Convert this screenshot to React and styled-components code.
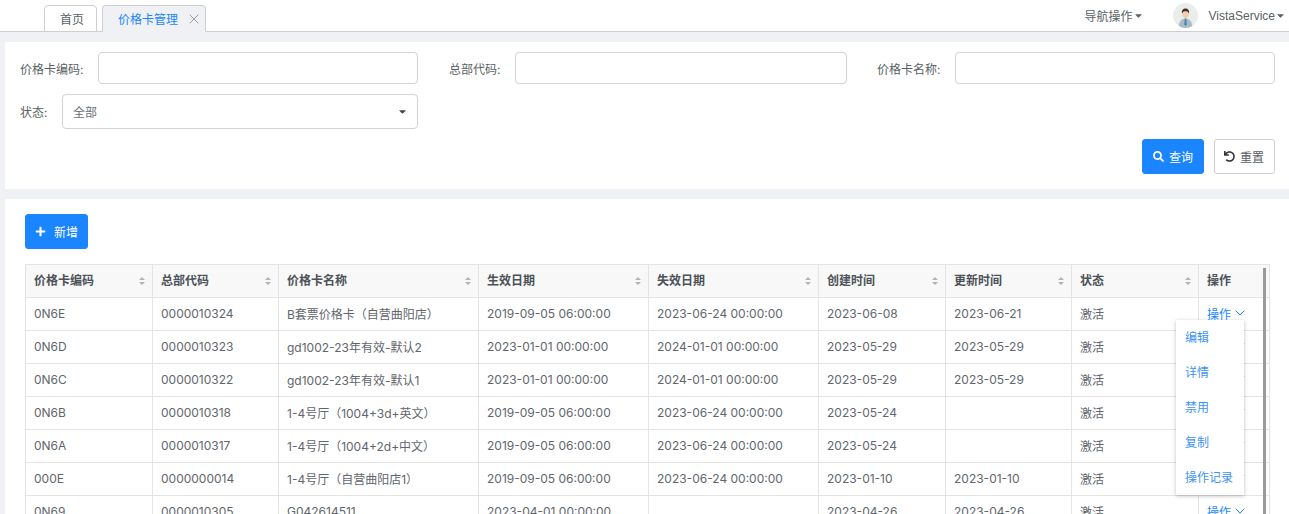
import styled, { createGlobalStyle } from "styled-components";
import { FaSearch, FaPlus, FaUndo, FaCaretDown } from "react-icons/fa";
import { LuChevronDown, LuX } from "react-icons/lu";

const columns = [
  { title: "价格卡编码", width: 127, sort: true },
  { title: "总部代码", width: 126, sort: true },
  { title: "价格卡名称", width: 200, sort: true },
  { title: "生效日期", width: 170, sort: true },
  { title: "失效日期", width: 170, sort: true },
  { title: "创建时间", width: 127, sort: true },
  { title: "更新时间", width: 126, sort: true },
  { title: "状态", width: 127, sort: true },
  { title: "操作", width: 71, sort: false },
];

const rows = [
  ["0N6E", "0000010324", "B套票价格卡（自营曲阳店）", "2019-09-05 06:00:00", "2023-06-24 00:00:00", "2023-06-08", "2023-06-21"],
  ["0N6D", "0000010323", "gd1002-23年有效-默认2", "2023-01-01 00:00:00", "2024-01-01 00:00:00", "2023-05-29", "2023-05-29"],
  ["0N6C", "0000010322", "gd1002-23年有效-默认1", "2023-01-01 00:00:00", "2024-01-01 00:00:00", "2023-05-29", "2023-05-29"],
  ["0N6B", "0000010318", "1-4号厅（1004+3d+英文）", "2019-09-05 06:00:00", "2023-06-24 00:00:00", "2023-05-24", ""],
  ["0N6A", "0000010317", "1-4号厅（1004+2d+中文）", "2019-09-05 06:00:00", "2023-06-24 00:00:00", "2023-05-24", ""],
  ["000E", "0000000014", "1-4号厅（自营曲阳店1）", "2019-09-05 06:00:00", "2023-06-24 00:00:00", "2023-01-10", "2023-01-10"],
  ["0N69", "0000010305", "G042614511", "2023-04-01 00:00:00", "", "2023-04-26", "2023-04-26"],
];

const menuItems = ["编辑", "详情", "禁用", "复制", "操作记录"];

const GlobalStyle = createGlobalStyle`
  html, body {
    margin: 0;
    height: 514px;
    overflow: hidden;
    background: #eff1f4;
  }
  body, input, button {
    font-family: Inter, "Noto Sans CJK SC", sans-serif;
    font-size: 12px;
    color: #595f66;
  }
`;

const Page = styled.div`
  height: 514px;
  overflow: hidden;
  display: flex;
  flex-direction: column;
`;

const TopBar = styled.header`
  height: 31px;
  flex: none;
  display: flex;
  align-items: flex-end;
  padding-left: 44px;
  gap: 5px;
  background: #fff;
  border-bottom: 1px solid #cfcfcf;
`;

const Tab = styled.div`
  height: 25px;
  margin-bottom: -1px;
  padding: ${(p) => (p.$active ? "0 3px 0 15px" : "0 12px 0 15px")};
  display: flex;
  align-items: center;
  gap: 8px;
  border: 1px solid #cfcfcf;
  border-bottom: 1px solid ${(p) => (p.$active ? "#eff1f4" : "#cfcfcf")};
  border-radius: 4px 4px 0 0;
  background: ${(p) => (p.$active ? "#eff1f4" : "#fff")};
  color: ${(p) => (p.$active ? "#1a85ff" : "#595f66")};
  svg {
    color: #9a9da1;
  }
`;

const TopRight = styled.div`
  margin-left: auto;
  height: 31px;
  display: flex;
  align-items: center;
  padding-right: 3px;
`;

const NavMenu = styled.span`
  display: flex;
  align-items: center;
  margin-right: 29px;
`;

const UserName = styled(NavMenu)`
  margin-right: 0;
  font-family: "Liberation Sans", sans-serif;
`;

const Avatar = styled.svg`
  width: 25px;
  height: 25px;
  margin-right: 11px;
  border-radius: 50%;
`;

const Panel = styled.section`
  margin: 10px 0 0 5px;
  background: #fff;
  flex: none;
`;

const FilterPanel = styled(Panel)`
  height: 147px;
  box-sizing: border-box;
  padding: 10px 14px 0 15px;
`;

const FieldRow = styled.div`
  display: flex;
  align-items: center;
  height: ${(p) => p.$height || 32}px;
  margin-bottom: 10px;
`;

const FieldLabel = styled.label`
  width: ${(p) => p.$width}px;
  flex: none;
  color: #595f66;
`;

const TextBox = styled.div`
  width: ${(p) => p.$width}px;
  height: 32px;
  box-sizing: border-box;
  flex: none;
  margin-right: ${(p) => p.$gap || 0}px;
  border: 1px solid #d4d4d4;
  border-radius: 4px;
  background: #fff;
`;

const SelectBox = styled(TextBox)`
  height: 35px;
  display: flex;
  align-items: center;
  justify-content: space-between;
  padding: 0 9px 0 10px;
  color: #6a7077;
`;

const ButtonRow = styled.div`
  display: flex;
  justify-content: flex-end;
  gap: 10px;
`;

const Button = styled.button`
  height: 35px;
  padding: ${(p) => (p.$primary ? "0 10px" : "0 10px 0 9px")};
  display: inline-flex;
  align-items: center;
  gap: 5px;
  border-radius: 3px;
  border: 1px solid ${(p) => (p.$primary ? "#1a85ff" : "#cfcfcf")};
  background: ${(p) => (p.$primary ? "#1a85ff" : "#fff")};
  color: ${(p) => (p.$primary ? "#fff" : "#595f66")};
  svg {
    font-size: 11px;
    color: ${(p) => (p.$primary ? "#fff" : "#333")};
  }
`;

const ListPanel = styled(Panel)`
  flex: 1;
  padding: 15px 19px 0 20px;
`;

const AddButton = styled(Button)`
  display: flex;
  padding: 0 9px;
  gap: 8px;
`;

const TableWrap = styled.div`
  position: relative;
  width: 1245px;
  margin-top: 15px;
`;

const Table = styled.table`
  border-collapse: collapse;
  table-layout: fixed;
  width: 1244px;
`;

const Th = styled.th`
  box-sizing: border-box;
  height: 33px;
  padding: 0 7px 3px 8px;
  text-align: left;
  font-weight: 600;
  color: #4c5258;
  background: #f8f8f8;
  border: 1px solid #e4e4e4;
`;

const HeadCell = styled.div`
  display: flex;
  align-items: center;
  justify-content: space-between;
`;

const Td = styled.td`
  box-sizing: border-box;
  height: 33px;
  padding: 0 8px 2px;
  white-space: nowrap;
  border: 1px solid #e4e4e4;
  color: #61666c;
`;

const SortIcon = styled.svg`
  width: 6px;
  height: 8px;
  margin-top: 3px;
  fill: #b0b4b9;
`;

const ActionLink = styled.span`
  display: inline-flex;
  align-items: center;
  gap: 1px;
  color: #1a85ff;
`;

const ScrollThumb = styled.div`
  position: absolute;
  top: 4px;
  right: 4px;
  bottom: 0;
  width: 3px;
  background: #9a9a9a;
`;

const Menu = styled.ul`
  position: absolute;
  top: 56px;
  left: 1151px;
  width: 68px;
  margin: 0;
  padding: 0 0 0 9px;
  box-sizing: border-box;
  list-style: none;
  background: #fff;
  box-shadow: 0 1px 4px rgba(0, 0, 0, 0.25);
  color: #3d93f5;
`;

const MenuItem = styled.li`
  height: 35px;
  box-sizing: border-box;
  padding-bottom: 2px;
  display: flex;
  align-items: center;
`;

function Sort() {
  return (
    <SortIcon viewBox="0 0 6 8">
      <path d="M3 0 6 3H0zM0 5h6L3 8z" />
    </SortIcon>
  );
}

function UserAvatar() {
  return (
    <Avatar viewBox="0 0 25 25">
      <rect width="25" height="25" fill="#e9eeec" />
      <path d="M5.500 25c.3-6 2.500-9.500 7-9.500s6.700 3.500 7 9.500z" fill="#a9bdc9" />
      <path d="M11.800 15.500h1.400l.5 6-1.200 1.500-1.200-1.500z" fill="#4d7ea8" />
      <ellipse cx="12.500" cy="10.500" rx="3.400" ry="4.400" fill="#f3cdaf" />
      <path d="M9 10.500c-.6-3.300 1.200-5 3.500-5s4.100 1.700 3.500 5c-.6-1.700-1.800-2.300-3.500-2.300s-2.900.6-3.500 2.300z" fill="#4a2f20" />
    </Avatar>
  );
}

export default function App() {
  return (
    <Page>
      <GlobalStyle />
      <TopBar>
        <Tab>首页</Tab>
        <Tab $active>
          价格卡管理
          <LuX size={16} strokeWidth={1.5} />
        </Tab>
        <TopRight>
          <NavMenu>
            导航操作
            <FaCaretDown size={11} />
          </NavMenu>
          <UserAvatar />
          <UserName>
            VistaService
            <FaCaretDown size={11} />
          </UserName>
        </TopRight>
      </TopBar>

      <FilterPanel>
        <FieldRow>
          <FieldLabel $width={78}>价格卡编码:</FieldLabel>
          <TextBox $width={320} $gap={31} />
          <FieldLabel $width={66}>总部代码:</FieldLabel>
          <TextBox $width={332} $gap={30} />
          <FieldLabel $width={78}>价格卡名称:</FieldLabel>
          <TextBox $width={320} />
        </FieldRow>
        <FieldRow $height={35}>
          <FieldLabel $width={42}>状态:</FieldLabel>
          <SelectBox $width={356}>
            全部
            <FaCaretDown size={11} color="#444" />
          </SelectBox>
        </FieldRow>
        <ButtonRow>
          <Button $primary>
            <FaSearch />
            查询
          </Button>
          <Button>
            <FaUndo />
            重置
          </Button>
        </ButtonRow>
      </FilterPanel>

      <ListPanel>
        <AddButton $primary>
          <FaPlus />
          新增
        </AddButton>
        <TableWrap>
          <Table>
            <colgroup>
              {columns.map((c) => (
                <col key={c.title} width={c.width} />
              ))}
            </colgroup>
            <thead>
              <tr>
                {columns.map((c) => (
                  <Th key={c.title}>
                    <HeadCell>
                      {c.title}
                      {c.sort && <Sort />}
                    </HeadCell>
                  </Th>
                ))}
              </tr>
            </thead>
            <tbody>
              {rows.map((r) => (
                <tr key={r[0]}>
                  {r.map((v, i) => (
                    <Td key={i}>{v}</Td>
                  ))}
                  <Td>激活</Td>
                  <Td>
                    <ActionLink>
                      操作
                      <LuChevronDown size={16} strokeWidth={1.5} />
                    </ActionLink>
                  </Td>
                </tr>
              ))}
            </tbody>
          </Table>
          <ScrollThumb />
          <Menu>
            {menuItems.map((m) => (
              <MenuItem key={m}>{m}</MenuItem>
            ))}
          </Menu>
        </TableWrap>
      </ListPanel>
    </Page>
  );
}
